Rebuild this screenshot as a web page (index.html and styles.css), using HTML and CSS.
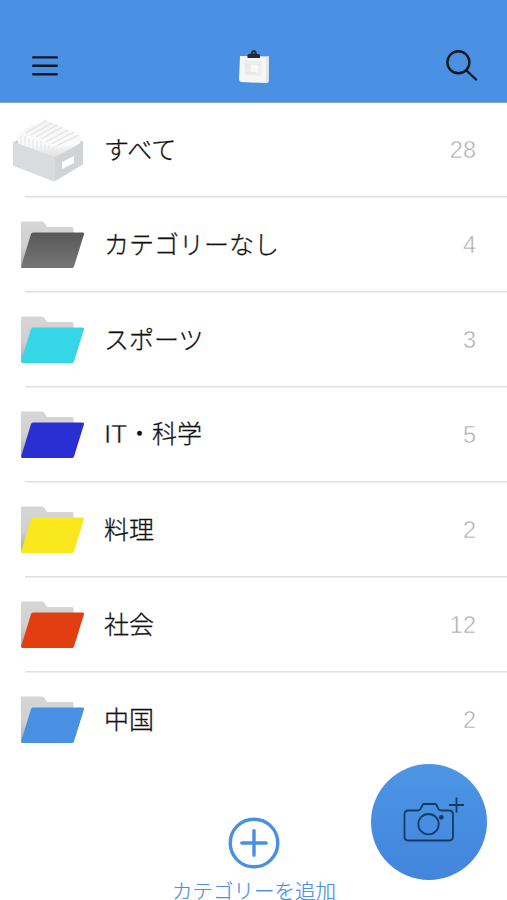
FILE: index.html
```html
<!DOCTYPE html>
<html lang="ja">
<head>
<meta charset="utf-8">
<meta name="viewport" content="width=device-width, initial-scale=1">
<title>カテゴリー</title>
<link rel="stylesheet" href="styles.css">
</head>
<body>
<svg class="defs" width="0" height="0" aria-hidden="true">
  <defs>
    <linearGradient id="back" x1="0" y1="0" x2="0" y2="1"><stop offset="0" stop-color="#d6d6d6"/><stop offset=".55" stop-color="#d0d0d0"/><stop offset="1" stop-color="#a8a8a8"/></linearGradient>
    <linearGradient id="shade" x1="0" y1="0" x2="0" y2="1"><stop offset="0" stop-color="#585858"/><stop offset="1" stop-color="#767676"/></linearGradient>
    <linearGradient id="paper" x1="0" y1="0" x2="0" y2="1"><stop offset="0" stop-color="#f3f3f3"/><stop offset=".65" stop-color="#fbfbfb"/><stop offset="1" stop-color="#dcdcdc"/></linearGradient>
    <symbol id="folder" viewBox="0 0 66 48">
      <path d="M1 1.500Q1 .5 2 .5H22Q23.500 .5 24.500 2L27 6H52Q53.500 6 53.500 7.500V40L2 46H1Z" fill="url(#back)"/>
      <path class="front" d="M13 11.500H62.500Q64.600 11.500 64 13.300L54 45.500Q53.500 47 52 47H2.500Q.6 47 1.200 45.200L11 13Q11.500 11.500 13 11.500Z"/>
    </symbol>
  </defs>
</svg>
<header class="bar">
  <svg class="menu" width="26" height="22" viewBox="0 0 26 22"><path d="M1.200 2.400H24.800M1.200 10.700H24.800M1.200 19.200H24.800"/></svg>
  <svg class="clip" width="32" height="36" viewBox="0 0 32 36">
    <path d="M2 8L31 8.500 30.500 34Q29 35.500 27 35L3 34Q1 33.500 1 31Z" fill="#f6f6f6"/>
    <path d="M28 8.500L31 8.500 30.500 34 28 35Z" fill="#e5e5e5"/>
    <path d="M6 12L24 13 23 28 7 27Z" fill="#eceeee"/>
    <path d="M13 17H20V24H13Z" fill="#f8f8f8"/>
    <path d="M7 17H12M7 20H12M7 25H18" stroke="#e0e3e4"/>
    <path d="M9.500 7.500Q9.500 6 11 6H12.500Q13.500 2 15.800 2T19 6H20.500Q22 6 22 7.500V10H9.500Z" fill="#252b34"/>
    <circle cx="15.700" cy="4.900" r="1.100" fill="#426389"/>
  </svg>
  <svg class="search" width="34" height="34" viewBox="0 0 34 34"><circle cx="13.400" cy="13.300" r="11"/><path d="M21.500 21.500L31 30.500"/></svg>
</header>
<main class="list">
  <div class="row">
    <svg class="icon box" width="72" height="64" viewBox="0 0 72 64">
      <path d="M1 24L8 19 65 19 71 23V45L42 62 1 46Z" fill="#c8cbce"/>
      <path d="M5 16Q5 13 10 13L13 9 18 9 20 6 24 6 26 3 30 4 32 0 36 2 68 16Q70 17 69 20L68 26 43 39 6 25Z" fill="url(#paper)"/>
      <path d="M14 14L34 2M19 16L40 4M24 18L45 6M29 20L51 8M34 23L56 11M39 25L62 13M44 27L67 16" fill="none" stroke="#e3e3e3" stroke-width="1.200"/>
      <path d="M9 17V26M13 17V28M17 19V30M21 20V32M25 22V33M29 23V35M33 25V36M37 26V37M41 28V39" fill="none" stroke="#e8e8e8" stroke-width="1.300"/>
      <path d="M1 22.500L43 38.500V62Q41 62.500 38 61L3 47.500Q1 46.500 1 44Z" fill="#d8dcdf"/>
      <path d="M43 38.500L71 22.500V43Q71 45 69 46.500L45 61 43 62Z" fill="#d0d4d7"/>
      <path d="M50 43L62 37V44L50 50Z" fill="#fff"/>
    </svg>
    <span class="name">すべて</span><span class="count">28</span>
  </div>
  <div class="row"><svg class="icon folder plain"><use href="#folder"/></svg><span class="name">カテゴリーなし</span><span class="count">4</span></div>
  <div class="row"><svg class="icon folder sports"><use href="#folder"/></svg><span class="name">スポーツ</span><span class="count">3</span></div>
  <div class="row"><svg class="icon folder science"><use href="#folder"/></svg><span class="name"><span class="latin">IT</span>・科学</span><span class="count">5</span></div>
  <div class="row"><svg class="icon folder cooking"><use href="#folder"/></svg><span class="name">料理</span><span class="count">2</span></div>
  <div class="row"><svg class="icon folder society"><use href="#folder"/></svg><span class="name">社会</span><span class="count">12</span></div>
  <div class="row"><svg class="icon folder china"><use href="#folder"/></svg><span class="name">中国</span><span class="count">2</span></div>
</main>
<footer class="add">
  <svg width="52" height="52" viewBox="0 0 52 52"><circle cx="26" cy="26" r="23.800"/><path d="M26 13.800V38.200M13.800 26H38.200"/></svg>
  <span>カテゴリーを追加</span>
</footer>
<button class="camera" aria-label="カメラ">
  <svg width="62" height="48" viewBox="0 0 62 48"><path d="M5.500 11.500H15Q17 11.500 18 9L19.500 6Q20 5 21.500 5H31.500Q33 5 33.500 6L35 9Q36 11.500 38 11.500H46Q50 11.500 50 15.500V37.500Q50 41.500 46 41.500H5.500Q1.500 41.500 1.500 37.500V15.500Q1.500 11.500 5.500 11.500Z"/><circle cx="25.500" cy="25.200" r="10.200"/><circle class="dot" cx="38.300" cy="18.300" r="1.500"/><path d="M53.500-1.500V13.500M46 6H61"/></svg>
</button>
</body>
</html>
```

FILE: styles.css
```css
* {
  box-sizing: border-box;
}

body {
  margin: 0;
  height: 900px;
  overflow: hidden;
  background: #fff;
  color: #111;
  font-family: "Liberation Sans", "Noto Sans CJK JP", sans-serif;
}

svg {
  display: block;
  flex: none;
}

.defs {
  position: absolute;
}

.bar {
  display: grid;
  grid-template-columns: 1fr auto 1fr;
  align-items: center;
  height: 102.500px;
  padding: 30px 28px 0 32px;
  background: #4a90e3;
  border-bottom: 1px solid #7fa9d8;
}

.menu,
.search {
  fill: none;
  stroke: #101820;
  stroke-width: 2.400;
  stroke-linecap: round;
}

.search {
  justify-self: end;
}

.clip {
  margin-right: 4px;
}

.row {
  display: flex;
  align-items: center;
  height: 95px;
  padding: 0 31px 0 20px;
  background: linear-gradient(#e0e0e0, #e0e0e0) 25px 100% / 100% 1.500px no-repeat;
}

.row:last-child {
  background: none;
}

.folder {
  width: 66px;
  height: 48px;
  margin-right: 18px;
}

.front {
  fill: var(--front);
}

.box {
  margin: 2px 20px 0 -8px;
}

.plain { --front: url(#shade); }
.sports { --front: #35d6e6; }
.science { --front: #2a2fd4; }
.cooking { --front: #f9e81e; }
.society { --front: #e33d12; }
.china { --front: #4990e2; }

.name {
  flex: 1;
  padding-bottom: 4px;
  font-family: "Noto Sans CJK JP", sans-serif;
  font-size: 25px;
  font-weight: 300;
  line-height: 36px;
  white-space: nowrap;
  -webkit-text-stroke: 0.3px #111;
}

.latin {
  font-family: "Liberation Sans", sans-serif;
  font-size: 26px;
  -webkit-text-stroke: 0.4px #fff;
}

.count {
  color: #aaa;
  font-size: 23.500px;
  -webkit-text-stroke: 0.5px #fff;
}

.add {
  display: flex;
  flex-direction: column;
  align-items: center;
  margin-top: 49px;
  color: #4a90e2;
  font-family: "Noto Sans CJK JP", sans-serif;
  font-size: 20.500px;
  font-weight: 300;
  line-height: 30px;
}

.add span {
  margin-left: 1px;
  -webkit-text-stroke: 0.200px currentColor;
}

.add svg {
  margin-bottom: 6px;
  fill: none;
  stroke: currentColor;
  stroke-width: 3.400;
  stroke-linecap: round;
}

.camera {
  position: absolute;
  left: 371px;
  top: 764px;
  width: 116px;
  height: 116px;
  padding: 2px 0 0 9px;
  border: 0;
  border-radius: 50%;
  background: linear-gradient(#4c95e4, #4285dd);
}

.camera svg {
  margin: 0 auto;
  overflow: visible;
  fill: none;
  stroke: #173a62;
  stroke-width: 1.800;
}

.camera .dot {
  fill: #173a62;
}
```
